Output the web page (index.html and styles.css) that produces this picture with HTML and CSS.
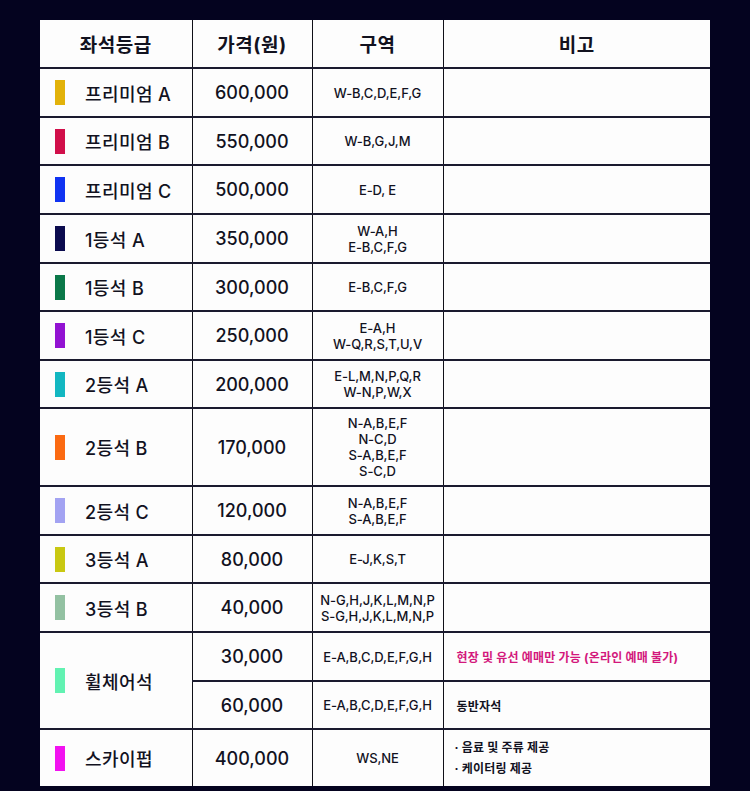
FILE: index.html
```html
<!DOCTYPE html>
<html lang="ko">
<head>
<meta charset="utf-8">
<link rel="stylesheet" href="styles.css">
</head>
<body>
<table class="seat-table">
  <colgroup>
    <col class="c-grade"><col class="c-price"><col class="c-zone"><col class="c-note">
  </colgroup>
  <thead>
    <tr class="h48"><th>좌석등급</th><th>가격(원)</th><th>구역</th><th>비고</th></tr>
  </thead>
  <tbody>
    <tr class="h49"><td class="grade"><span class="bar b-pa"></span><span>프리미엄 A</span></td><td class="price">600,000</td><td class="zone">W-B,C,D,E,F,G</td><td></td></tr>
    <tr class="h48"><td class="grade"><span class="bar b-pb"></span><span>프리미엄 B</span></td><td class="price">550,000</td><td class="zone">W-B,G,J,M</td><td></td></tr>
    <tr class="h49"><td class="grade"><span class="bar b-pc"></span><span>프리미엄 C</span></td><td class="price">500,000</td><td class="zone">E-D, E</td><td></td></tr>
    <tr class="h49"><td class="grade"><span class="bar b-1a"></span><span>1등석 A</span></td><td class="price">350,000</td><td class="zone"><div>W-A,H</div><div>E-B,C,F,G</div></td><td></td></tr>
    <tr class="h48"><td class="grade"><span class="bar b-1b"></span><span>1등석 B</span></td><td class="price">300,000</td><td class="zone">E-B,C,F,G</td><td></td></tr>
    <tr class="h49"><td class="grade"><span class="bar b-1c"></span><span>1등석 C</span></td><td class="price">250,000</td><td class="zone"><div>E-A,H</div><div>W-Q,R,S,T,U,V</div></td><td></td></tr>
    <tr class="h48"><td class="grade"><span class="bar b-2a"></span><span>2등석 A</span></td><td class="price">200,000</td><td class="zone"><div>E-L,M,N,P,Q,R</div><div>W-N,P,W,X</div></td><td></td></tr>
    <tr class="h78"><td class="grade"><span class="bar b-2b"></span><span>2등석 B</span></td><td class="price">170,000</td><td class="zone"><div>N-A,B,E,F</div><div>N-C,D</div><div>S-A,B,E,F</div><div>S-C,D</div></td><td></td></tr>
    <tr class="h49"><td class="grade"><span class="bar b-2c"></span><span>2등석 C</span></td><td class="price">120,000</td><td class="zone"><div>N-A,B,E,F</div><div>S-A,B,E,F</div></td><td></td></tr>
    <tr class="h48"><td class="grade"><span class="bar b-3a"></span><span>3등석 A</span></td><td class="price">80,000</td><td class="zone">E-J,K,S,T</td><td></td></tr>
    <tr class="h49"><td class="grade"><span class="bar b-3b"></span><span>3등석 B</span></td><td class="price">40,000</td><td class="zone"><div>N-G,H,J,K,L,M,N,P</div><div>S-G,H,J,K,L,M,N,P</div></td><td></td></tr>
    <tr class="h49"><td class="grade" rowspan="2"><span class="bar b-wc"></span><span>휠체어석</span></td><td class="price">30,000</td><td class="zone">E-A,B,C,D,E,F,G,H</td><td class="note pink">현장 및 유선 예매만 가능 (온라인 예매 불가)</td></tr>
    <tr class="h48"><td class="price">60,000</td><td class="zone">E-A,B,C,D,E,F,G,H</td><td class="note">동반자석</td></tr>
    <tr class="h57"><td class="grade"><span class="bar b-sp"></span><span>스카이펍</span></td><td class="price">400,000</td><td class="zone">WS,NE</td><td class="note list"><div>· 음료 및 주류 제공</div><div>· 케이터링 제공</div></td></tr>
  </tbody>
</table>
</body>
</html>
```
FILE: styles.css
```css
html, body {
  margin: 0;
  padding: 0;
  background: #04031f;
}
body {
  padding: 20px 0 0 40px;
  font-family: "Inter", "Noto Sans CJK KR", "Noto Sans", sans-serif;
  color: #12121f;
}
.seat-table {
  border-collapse: collapse;
  background: #fdfdfd;
  width: 670px;
  table-layout: fixed;
}
.c-grade { width: 152px; }
.c-price { width: 120px; }
.c-zone { width: 131px; }
.c-note { width: 267px; }
th, td {
  border-top: 2px solid #1a1a2e;
  border-bottom: 2px solid #1a1a2e;
  border-left: 1.5px solid #101018;
  border-right: 1.5px solid #101018;
  padding: 0;
  text-align: center;
  vertical-align: middle;
}
tr:first-child th { border-top: none; }
th:first-child, td.grade { border-left: none; }
th:last-child, td:last-child { border-right: none; }
tbody tr:last-child td { border-bottom: none; }
th {
  font-size: 19px;
  font-weight: 700;
  letter-spacing: 0.5px;
}
.h48 { height: 48px; }
.h49 { height: 49px; }
.h57 { height: 57px; }
.h78 { height: 78px; }
.grade {
  text-align: left;
  padding-left: 15px;
  font-size: 18px;
  font-weight: 500;
  letter-spacing: 0.4px;
}
.grade > span { vertical-align: middle; }
.bar {
  display: inline-block;
  width: 10px;
  height: 25px;
  margin-right: 20px;
}
.b-pa { background: #e2b20a; }
.b-pb { background: #d10f4a; }
.b-pc { background: #1033f2; }
.b-1a { background: #0b0b4e; }
.b-1b { background: #0b7849; }
.b-1c { background: #9212d2; }
.b-2a { background: #13b7c1; }
.b-2b { background: #fb6a12; }
.b-2c { background: #a3a3f2; }
.b-3a { background: #c9c812; }
.b-3b { background: #93c1a2; }
.b-wc { background: #62f2b2; }
.b-sp { background: #f212f0; }
.price {
  font-size: 18px;
  font-weight: 500;
}
.zone {
  font-size: 13px;
  font-weight: 500;
  line-height: 16px;
  letter-spacing: -0.1px;
}
.note {
  text-align: left;
  padding-left: 13px;
  font-size: 12px;
  font-weight: 700;
  letter-spacing: 0.2px;
}
.pink { color: #d3187c; }
.list { line-height: 21px; padding-left: 11px; }
```
